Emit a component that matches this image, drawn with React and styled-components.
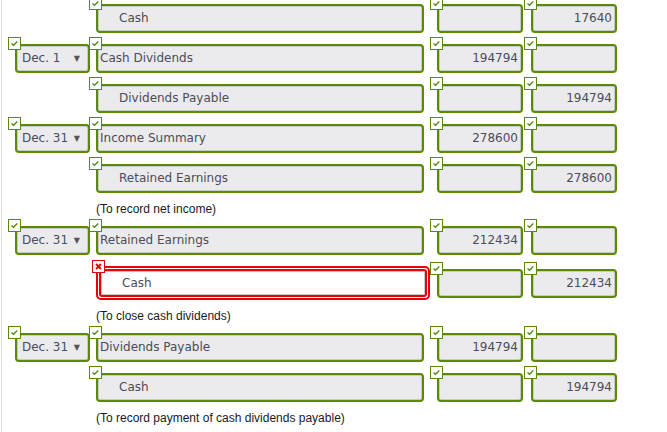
import React from "react"
import styled, { createGlobalStyle } from "styled-components"

const GlobalStyle = createGlobalStyle`
  html, body {
    margin: 0;
    padding: 0;
    background: #fff;
  }
`

const green = "#5a8a00"
const red = "#e8000b"

const Sheet = styled.div`
  margin-left: 1px;
  border-left: 1px solid #dfe3e8;
  height: 432px;
  box-sizing: border-box;
  padding: 4px 0 0 13px;
  display: flex;
  flex-direction: column;
  gap: 11px;
  overflow: hidden;
  font-family: "DejaVu Sans", Verdana, sans-serif;
  font-size: 12px;
`

const Row = styled.div`
  display: flex;
  align-items: center;
`

const Cell = styled.div`
  position: relative;
  flex: none;
  width: ${p => p.$width}px;
  margin-left: ${p => p.$gap || 0}px;
`

const Box = styled.div`
  box-sizing: border-box;
  height: 29px;
  border: 2px solid ${green};
  border-radius: 4px;
  background: #ebebed;
  box-shadow: inset 0 0 0 1px #c9c9c9;
  color: #4b4b5a;
  line-height: 25px;
  padding: 0 ${p => (p.$right ? 3 : 2)}px 0 2px;
  text-align: ${p => (p.$right ? "right" : "left")};
  white-space: nowrap;
  overflow: hidden;
`

const Text = styled.span`
  padding-left: ${p => (p.$indent ? 19 : 0)}px;
`

const DateBox = styled(Box)`
  display: flex;
  justify-content: space-between;
  padding: 0 8px 0 5px;
`

const Arrow = styled.span`
  font-size: 8px;
  color: #555;
`

const ErrorFrame = styled.div`
  box-sizing: border-box;
  width: 334px;
  border: 2px solid ${red};
  border-radius: 5px;
  padding: 1px;
  background: #fff;
`

const ErrorBox = styled(Box)`
  height: 28px;
  line-height: 24px;
  border-color: ${red};
  border-radius: 3px;
  background: #fff;
`

const Badge = styled.span`
  position: absolute;
  top: ${p => (p.$error ? -6 : -7)}px;
  left: ${p => (p.$error ? -4 : -7)}px;
  box-sizing: border-box;
  width: 13px;
  height: 13px;
  border: 1px solid ${p => (p.$error ? red : green)};
  background: #fff;
  display: flex;
  align-items: center;
  justify-content: center;
  z-index: 1;
`

const Note = styled.div`
  height: 11px;
  line-height: 11px;
  margin-left: 81px;
  font-family: "Liberation Sans", Arial, sans-serif;
  font-size: 12px;
  color: #1a1a1a;
`

const Check = () => (
  <Badge>
    <svg width="11" height="11" viewBox="0 0 11 11">
      <path d="M2.5 5.5 L4.5 7.3 L8.3 3.5" fill="none" stroke="#5a8a1a" strokeWidth="1.4" />
    </svg>
  </Badge>
)

const Cross = () => (
  <Badge $error>
    <svg width="11" height="11" viewBox="0 0 11 11">
      <path d="M3 3 L8 8 M8 3 L3 8" fill="none" stroke={red} strokeWidth="2" />
    </svg>
  </Badge>
)

const DateField = ({ value }) =>
  value ? (
    <Cell $width={75}>
      <Check />
      <DateBox>
        <span>{value}</span>
        <Arrow>▼</Arrow>
      </DateBox>
    </Cell>
  ) : (
    <Cell $width={75} />
  )

const AccountField = ({ name, indent, error }) => (
  <Cell $width={328} $gap={6}>
    {error ? <Cross /> : <Check />}
    {error ? (
      <ErrorFrame>
        <ErrorBox>
          <Text $indent={indent}>{name}</Text>
        </ErrorBox>
      </ErrorFrame>
    ) : (
      <Box>
        <Text $indent={indent}>{name}</Text>
      </Box>
    )}
  </Cell>
)

const AmountField = ({ value, gap }) => (
  <Cell $width={86} $gap={gap}>
    <Check />
    <Box $right>{value}</Box>
  </Cell>
)

const entries = [
  { account: "Cash", indent: true, credit: "17640" },
  { date: "Dec. 1", account: "Cash Dividends", debit: "194794" },
  { account: "Dividends Payable", indent: true, credit: "194794" },
  { date: "Dec. 31", account: "Income Summary", debit: "278600" },
  { account: "Retained Earnings", indent: true, credit: "278600" },
  { note: "(To record net income)" },
  { date: "Dec. 31", account: "Retained Earnings", debit: "212434" },
  { account: "Cash", indent: true, credit: "212434", error: true },
  { note: "(To close cash dividends)" },
  { date: "Dec. 31", account: "Dividends Payable", debit: "194794" },
  { account: "Cash", indent: true, credit: "194794" },
  { note: "(To record payment of cash dividends payable)" },
]

const App = () => (
  <>
    <GlobalStyle />
    <Sheet>
      {entries.map((e, i) =>
        e.note ? (
          <Note key={i}>{e.note}</Note>
        ) : (
          <Row key={i}>
            <DateField value={e.date} />
            <AccountField name={e.account} indent={e.indent} error={e.error} />
            <AmountField value={e.debit} gap={13} />
            <AmountField value={e.credit} gap={8} />
          </Row>
        )
      )}
    </Sheet>
  </>
)

export default App
